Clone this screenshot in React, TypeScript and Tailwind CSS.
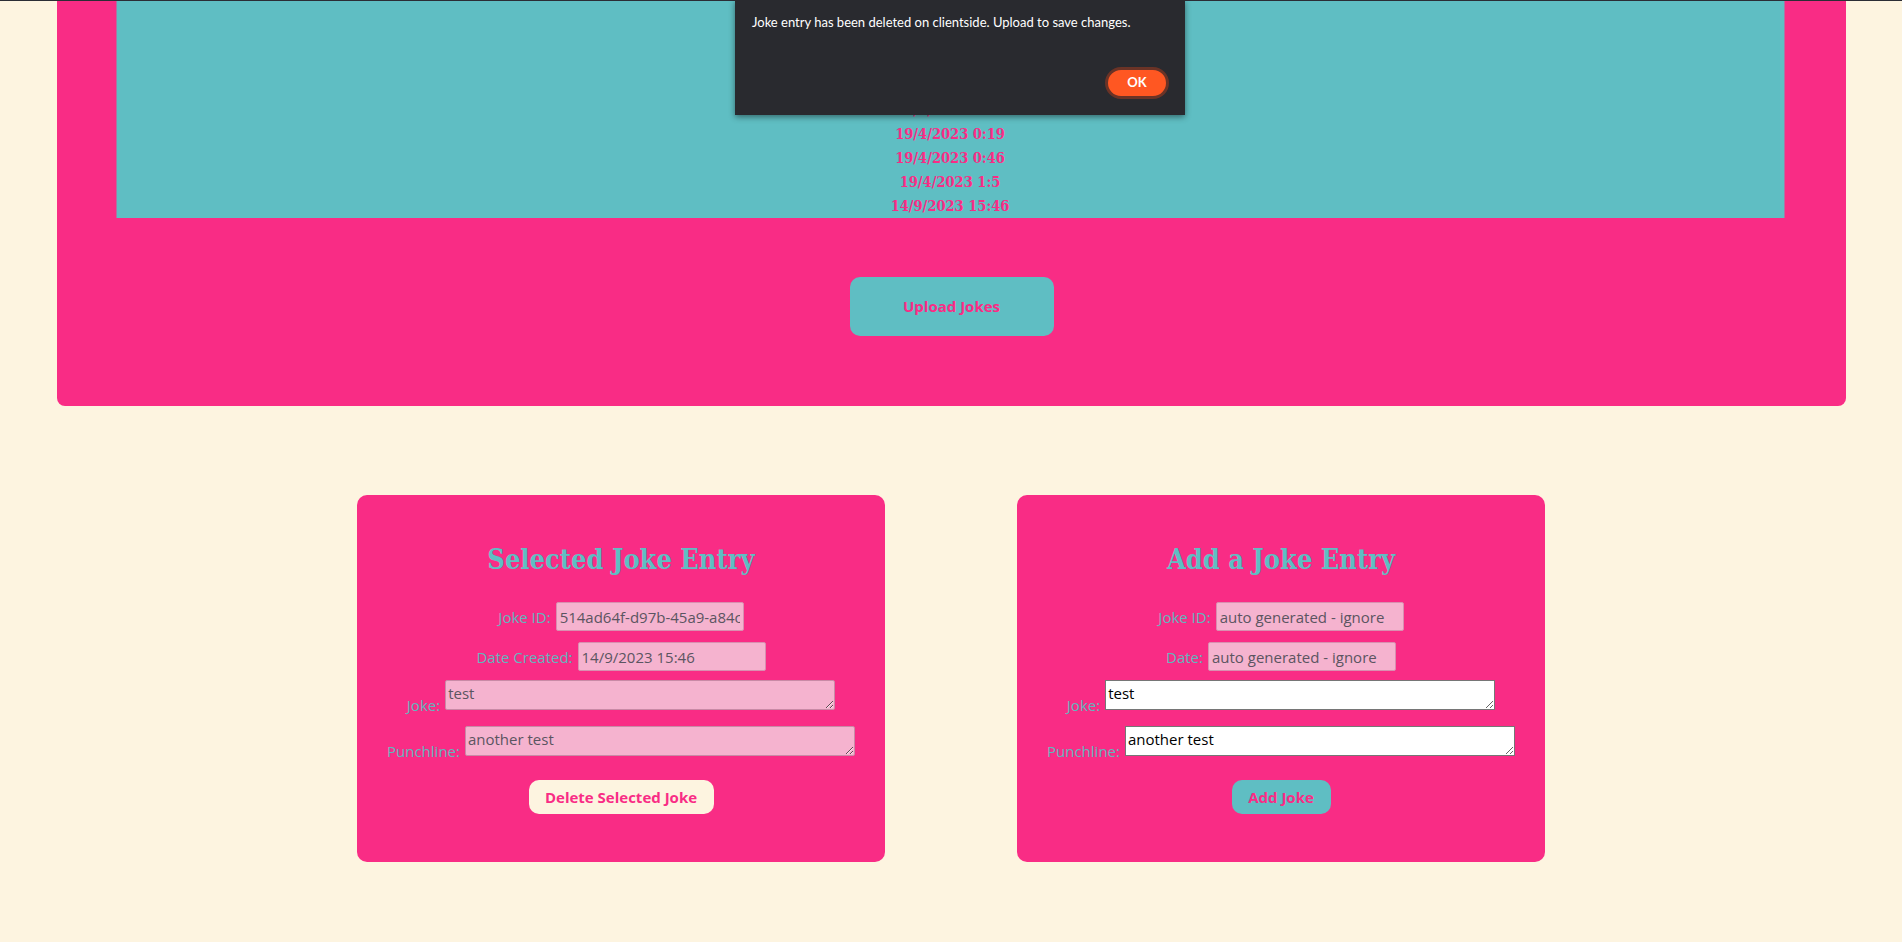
import React from 'react';

const dates = [
  '18/4/2023 21:2',
  '18/4/2023 22:10',
  '18/4/2023 23:41',
  '19/4/2023 0:2',
  '19/4/2023 0:11',
  '19/4/2023 0:14',
  '19/4/2023 0:19',
  '19/4/2023 0:46',
  '19/4/2023 1:5',
  '14/9/2023 15:46',
];

const heading = { fontFamily: '"DejaVu Serif Condensed", "Liberation Serif", serif' };
const sans = { fontFamily: '"Open Sans", "Noto Sans", sans-serif' };

const App: React.FC = () => {
  return (
    <div className="relative min-h-screen w-full overflow-hidden bg-[#fdf4e0]" style={sans}>
      <div className="h-px w-full bg-[#2b2d35]" />

      {/* Joke table panel */}
      <div className="ml-[57px] mr-[56px] flex flex-col items-center rounded-b-[8px] bg-[#f92c85] pb-[70px]">
        <div
          className="flex h-[217px] w-[calc(100%-121px)] -translate-x-[1.5px] flex-col items-center justify-end overflow-hidden bg-[#5fbec3] text-[14.5px] font-bold leading-[24px] text-[#f92c85]"
          style={heading}
        >
          {dates.map(d => (
            <div key={d}>{d}</div>
          ))}
        </div>
        <button className="mt-[59px] h-[59px] w-[204px] rounded-[10px] bg-[#5fbec3] text-[15px] font-bold text-[#f92c85]">
          Upload Jokes
        </button>
      </div>

      {/* Entry cards */}
      <div className="mt-[89px] flex justify-center gap-[132px]">
        <div className="flex w-[528px] flex-col items-center rounded-[10px] bg-[#f92c85] pt-[47px] pb-[48px] text-[15px] text-[#63b6bd]">
          <h2 className="text-[27px] font-bold leading-[36px] text-[#5fbec3]" style={heading}>Selected Joke Entry</h2>
          <div className="mt-[24px] flex h-[29px] items-baseline gap-[5px]">
            <span>Joke ID:</span>
            <input
              disabled
              value="514ad64f-d97b-45a9-a84c-2f1e9d3b7a10"
              readOnly
              className="h-[29px] w-[188px] rounded-[2px] border border-[#d98fb0] bg-[#f5b3cf] px-[3px] text-[#5b5561]"
            />
          </div>
          <div className="mt-[11px] flex h-[29px] items-baseline gap-[5px]">
            <span>Date Created:</span>
            <input
              disabled
              value="14/9/2023 15:46"
              readOnly
              className="h-[29px] w-[188px] rounded-[2px] border border-[#d98fb0] bg-[#f5b3cf] px-[3px] text-[#5b5561]"
            />
          </div>
          <div className="mt-[9px] flex items-end gap-[5px]">
            <span className="mb-[-3px] leading-none">Joke:</span>
            <textarea
              disabled
              value="test"
              readOnly
              className="block h-[30px] w-[390px] rounded-[2px] border border-[#c98aa6] bg-[#f5b3cf] p-[2px] leading-[20px] text-[#5b5561]"
            />
          </div>
          <div className="mt-[16px] flex items-end gap-[5px]">
            <span className="mb-[-3px] leading-none">Punchline:</span>
            <textarea
              disabled
              value="another test"
              readOnly
              className="block h-[30px] w-[390px] rounded-[2px] border border-[#c98aa6] bg-[#f5b3cf] p-[2px] leading-[20px] text-[#5b5561]"
            />
          </div>
          <button className="mt-[24px] h-[34px] w-[185px] rounded-[10px] bg-[#fdf4e0] text-[15px] font-bold text-[#f92c85]">
            Delete Selected Joke
          </button>
        </div>

        <div className="flex w-[528px] flex-col items-center rounded-[10px] bg-[#f92c85] pt-[47px] pb-[48px] text-[15px] text-[#63b6bd]">
          <h2 className="text-[27px] font-bold leading-[36px] text-[#5fbec3]" style={heading}>Add a Joke Entry</h2>
          <div className="mt-[24px] flex h-[29px] items-baseline gap-[5px]">
            <span>Joke ID:</span>
            <input
              disabled
              value="auto generated - ignore"
              readOnly
              className="h-[29px] w-[188px] rounded-[2px] border border-[#d98fb0] bg-[#f5b3cf] px-[3px] text-[#5b5561]"
            />
          </div>
          <div className="mt-[11px] flex h-[29px] items-baseline gap-[5px]">
            <span>Date:</span>
            <input
              disabled
              value="auto generated - ignore"
              readOnly
              className="h-[29px] w-[188px] rounded-[2px] border border-[#d98fb0] bg-[#f5b3cf] px-[3px] text-[#5b5561]"
            />
          </div>
          <div className="mt-[9px] flex items-end gap-[5px]">
            <span className="mb-[-3px] leading-none">Joke:</span>
            <textarea
              defaultValue="test"
              className="block h-[30px] w-[390px] border border-[#767676] bg-white p-[2px] leading-[20px] text-black"
            />
          </div>
          <div className="mt-[16px] flex items-end gap-[5px]">
            <span className="mb-[-3px] leading-none">Punchline:</span>
            <textarea
              defaultValue="another test"
              className="block h-[30px] w-[390px] border border-[#767676] bg-white p-[2px] leading-[20px] text-black"
            />
          </div>
          <button className="mt-[24px] h-[34px] w-[99px] rounded-[10px] bg-[#5fbec3] text-[15px] font-bold text-[#f92c85]">
            Add Joke
          </button>
        </div>
      </div>

      {/* Alert dialog */}
      <div className="absolute left-[735px] top-0 h-[115px] w-[450px] overflow-hidden bg-[#292a2f] shadow-[0_2px_6px_rgba(0,0,0,0.45)]" style={{ fontFamily: 'Lato, "Open Sans", sans-serif' }}>
        <div className="absolute left-[22px] top-[-17px] text-[14px] font-bold leading-[20px] text-white">jokes-app-yyjqppy.pages.dev says</div>
        <p className="ml-[17px] mt-[14px] text-[13px] leading-[16px] text-white">
          Joke entry has been deleted on clientside. Upload to save changes.
        </p>
        <button className="absolute right-[16px] bottom-[16px] h-[32px] w-[64px] rounded-full border-[3px] border-[#6b3326] bg-[#ff5722] text-[13px] font-bold text-white">
          OK
        </button>
      </div>
    </div>
  );
};

export default App;
